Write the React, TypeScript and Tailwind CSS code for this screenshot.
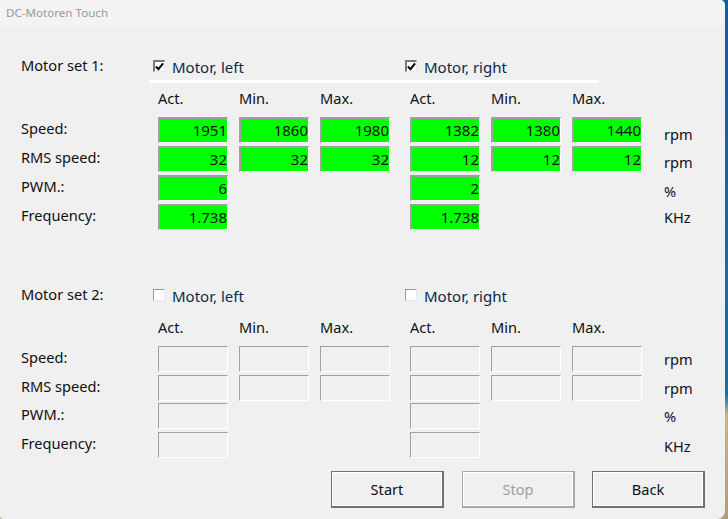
const font = { fontFamily: '"Noto Sans", sans-serif' };

function Field({ value, on }: { value?: string; on: boolean }) {
  return (
    <div
      className={
        "w-[70px] h-[26px] border border-r-white border-b-white border-t-[#a0a0a0] border-l-[#a0a0a0] flex items-center justify-end text-[15px] text-[#111] leading-none " +
        (on ? "bg-[#00ff00] border-t-2 border-l-2" : "bg-[#f0f0f0]")
      }
    >
      {value}
    </div>
  );
}

function Group({ values, on, count }: { values: string[]; on: boolean; count: number }) {
  return (
    <div className="flex gap-[11px] w-[232px]">
      {Array.from({ length: count }).map((_, i) => (
        <Field key={i} value={values[i]} on={on} />
      ))}
    </div>
  );
}

function Check({ checked, label }: { checked: boolean; label: string }) {
  return (
    <div className="flex items-center gap-[7px] w-[252px] h-[20px]">
      <div
        className={
          "w-[12px] h-[12px] -translate-y-[1px] bg-white border border-r-[#e8e8e8] border-b-[#e8e8e8] flex items-center justify-center " +
          (checked ? "border-t-2 border-l-2 border-t-[#777] border-l-[#777]" : "border-t-[#999] border-l-[#999]")
        }
      >
        {checked && (
          <svg viewBox="0 0 10 10" className="w-[9px] h-[9px]">
            <path d="M1 5 L3.8 8 L9 1.5" stroke="#000" strokeWidth="2.2" fill="none" />
          </svg>
        )}
      </div>
      <span className="text-[15px] text-[#0b2a4a]">{label}</span>
    </div>
  );
}

function Headers() {
  const h = ["Act.", "Min.", "Max."];
  return (
    <div className="flex h-[20px] pl-[137px] text-[14.6px] text-[#111] items-center translate-y-[1px]">
      {[0, 1].map((g) => (
        <div key={g} className="flex gap-[11px] w-[252px]">
          {h.map((t) => (
            <span key={t} className="w-[70px]">
              {t}
            </span>
          ))}
        </div>
      ))}
    </div>
  );
}

type RowData = {
  label: string;
  unit: string;
  left: string[];
  right: string[];
  count: number;
  unitClass: string;
  rowClass?: string;
};

function Section({
  title,
  on,
  rows,
  line,
}: {
  title: string;
  on: boolean;
  rows: RowData[];
  line: boolean;
}) {
  return (
    <section className="pl-[21px]">
      <div className="flex h-[20px] items-center">
        <div className="w-[132px] text-[14.6px] text-[#111] -translate-y-[1px]">{title}</div>
        <Check checked={on} label="Motor, left" />
        <Check checked={on} label="Motor, right" />
      </div>
      <div className={"ml-[128px] w-[450px] h-[3px] mt-[3px] mb-[5px] " + (line ? "bg-white" : "")} />
      <Headers />
      <div className="flex flex-col gap-[3px] mt-[9px]">
        {rows.map((r) => (
          <div key={r.label} className={"flex h-[26px] " + (r.rowClass ?? "")}>
            <div className="w-[137px] text-[14.6px] text-[#111] flex items-center -translate-y-[1px]">{r.label}</div>
            <div className="flex gap-[20px]">
              <Group values={r.left} on={on} count={r.count} />
              <Group values={r.right} on={on} count={r.count} />
            </div>
            <div className={"ml-[22px] text-[14.6px] text-[#111] flex items-center " + r.unitClass}>{r.unit}</div>
          </div>
        ))}
      </div>
    </section>
  );
}

const active: RowData[] = [
  { label: "Speed:", unit: "rpm", left: ["1951", "1860", "1980"], right: ["1382", "1380", "1440"], count: 3, unitClass: "pt-[10px]" },
  { label: "RMS speed:", unit: "rpm", left: ["32", "32", "32"], right: ["12", "12", "12"], count: 3, unitClass: "pt-[8px]" },
  { label: "PWM.:", unit: "%", left: ["6"], right: ["2"], count: 1, unitClass: "pt-[8px]" },
  { label: "Frequency:", unit: "KHz", left: ["1.738"], right: ["1.738"], count: 1, unitClass: "pt-[2px]" },
];
const idle: RowData[] = [
  { label: "Speed:", unit: "rpm", left: [], right: [], count: 3, unitClass: "pt-[2px]" },
  { label: "RMS speed:", unit: "rpm", left: [], right: [], count: 3, unitClass: "pt-[2px]" },
  { label: "PWM.:", unit: "%", left: [], right: [], count: 1, unitClass: "pt-[2px]", rowClass: "-mt-[1px]" },
  { label: "Frequency:", unit: "KHz", left: [], right: [], count: 1, unitClass: "pt-[4px]" },
];

function Btn({ label, disabled, extra }: { label: string; disabled?: boolean; extra?: string }) {
  return (
    <div
      className={
        "w-[113px] h-[37px] pt-[1px] bg-[#f0f0f0] border border-b-2 border-r-2 flex items-center justify-center text-[14.6px] shadow-[inset_0_0_0_1px_#fff] " +
        (disabled ? "border-[#a8a8a8] text-[#a0a0a0] " : "border-[#707070] text-[#111] ") +
        (extra ?? "")
      }
    >
      {label}
    </div>
  );
}

export default function App() {
  return (
    <div
      className="w-[728px] h-[519px] overflow-hidden bg-[linear-gradient(to_bottom,#0a5cb4_0%,#0a74b8_76%,#c8b48c_80%,#b09a78_100%)]"
      style={font}
    >
      <div className="w-[725px] h-[519px] bg-[#f0f0f0] rounded-br-[8px] rounded-tr-[5px] rounded-bl-[3px] flex flex-col overflow-hidden">
        <header className="h-[27px] shrink-0 bg-[#f3f3f3] pl-[6px] pb-[1px] flex items-center text-[11.6px] text-[#999]">
          DC-Motoren Touch
        </header>
        <div className="pt-[30px]">
          <Section title="Motor set 1:" on rows={active} line />
        </div>
        <div className="pt-[56px]">
          <Section title="Motor set 2:" on={false} rows={idle} line={false} />
        </div>
        <div className="flex justify-end gap-[18px] pr-[20px] mt-[13px]">
          <Btn label="Start" />
          <Btn label="Stop" disabled />
          <Btn label="Back" extra="-ml-[1px]" />
        </div>
      </div>
    </div>
  );
}
